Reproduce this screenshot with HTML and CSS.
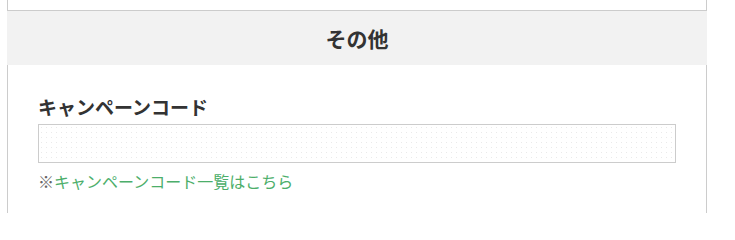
FILE: index.html
```html
<!DOCTYPE html>
<html lang="ja">
<head>
<meta charset="utf-8">
<link rel="stylesheet" href="styles.css">
</head>
<body>
<div class="wrap">
  <div class="prev"></div>
  <h2 class="head">その他</h2>
  <div class="section">
    <label class="label" for="code">キャンペーンコード</label>
    <input class="input" id="code" type="text">
    <p class="note"><span class="mark">※</span><a class="link" href="#">キャンペーンコード一覧はこちら</a></p>
  </div>
</div>
</body>
</html>
```
FILE: styles.css
```css
* { box-sizing: border-box; }
html, body { margin: 0; padding: 0; background: #fff; }
body {
  font-family: "Noto Sans CJK JP", "Noto Sans", sans-serif;
  color: #333;
}
.wrap { margin-left: 7px; width: 700px; }
.prev {
  height: 11px;
  border-left: 1px solid #ccc;
  border-right: 1px solid #ccc;
  border-bottom: 1px solid #ccc;
}
.head {
  margin: 0;
  height: 54px;
  background: #f2f2f2;
  display: flex;
  align-items: center;
  justify-content: center;
  font-size: 21px;
  font-weight: bold;
  color: #333;
}
.section {
  border-left: 1px solid #ccc;
  border-right: 1px solid #ccc;
  padding: 28px 30px 20px;
}
.label {
  display: block;
  font-size: 19px;
  font-weight: bold;
  line-height: 27px;
  margin-bottom: 4px;
}
.input {
  display: block;
  width: 100%;
  height: 39px;
  border: 1px solid #ccc;
  background-color: #fff;
  background-image: radial-gradient(circle, #eaeaea 0.6px, transparent 0.9px);
  background-size: 5px 5px;
  margin: 0;
  padding: 0 10px;
}
.note {
  margin: 6px 0 0;
  font-size: 16px;
  line-height: 24px;
}
.mark { color: #666; }
.link { color: #4cae6a; text-decoration: none; }
```
